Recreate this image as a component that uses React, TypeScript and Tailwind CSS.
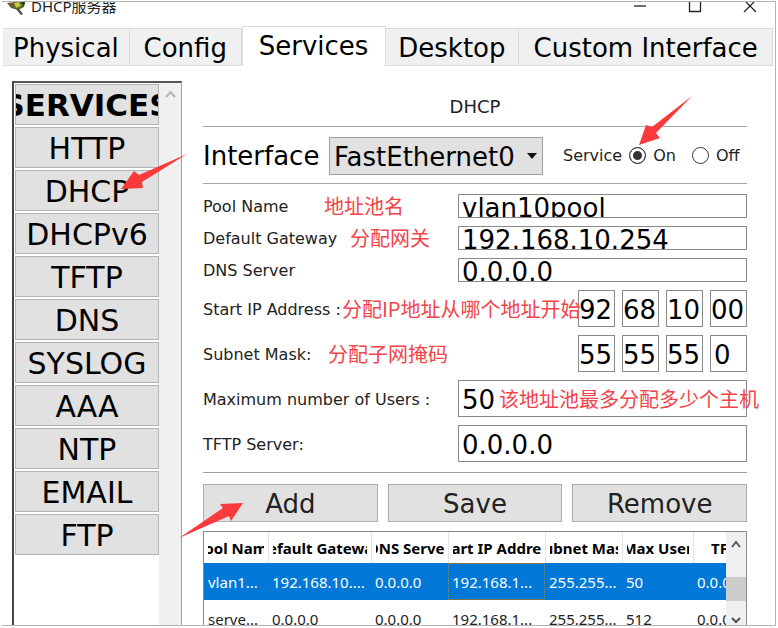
import React from "react";

const tabs = ["Physical", "Config", "Services", "Desktop", "Custom Interface"];
const services = ["HTTP", "DHCP", "DHCPv6", "TFTP", "DNS", "SYSLOG", "AAA", "NTP", "EMAIL", "FTP"];

const columns = [
  { label: "Pool Name", width: "w-16" },
  { label: "Default Gateway", width: "w-[103px]" },
  { label: "DNS Server", width: "w-[77px]" },
  { label: "Start IP Address", width: "w-[97px]" },
  { label: "Subnet Mask", width: "w-[77px]" },
  { label: "Max User", width: "w-[71px]" },
  { label: "TFTP", width: "w-[71px]" },
];

const pools = [
  ["vlan1...", "192.168.10....", "0.0.0.0", "192.168.1...", "255.255...", "50", "0.0.0.0"],
  ["serve...", "0.0.0.0", "0.0.0.0", "192.168.1...", "255.255...", "512", "0.0.0.0"],
];

function Note({ place, children }: { place: string; children: React.ReactNode }) {
  return (
    <span
      className={`pointer-events-none absolute top-1/2 z-10 -translate-y-1/2 whitespace-nowrap font-['Noto_Sans_CJK_SC',sans-serif] text-[20px] leading-6 text-[#f2444a] ${place}`}
    >
      {children}
    </span>
  );
}

function Arrow({ place, size, points }: { place: string; size: [number, number]; points: string }) {
  return (
    <svg
      className={`pointer-events-none absolute z-20 ${place}`}
      width={size[0]}
      height={size[1]}
      viewBox={`0 0 ${size[0]} ${size[1]}`}
      aria-hidden="true"
    >
      <polygon points={points} fill="#fb3a3c" />
    </svg>
  );
}

function TextRow({
  id,
  label,
  value,
  height,
  children,
}: {
  id: string;
  label: string;
  value: string;
  height: string;
  children?: React.ReactNode;
}) {
  return (
    <div className="relative flex items-center">
      <label htmlFor={id} className="w-[255px] shrink-0 pt-0.5 text-base leading-5 whitespace-nowrap">
        {label}
      </label>
      <input
        id={id}
        defaultValue={value}
        className={`min-w-0 flex-1 border border-[#8a8a8a] bg-white px-[3px] text-[26px] leading-7 text-black outline-none ${height}`}
      />
      {children}
    </div>
  );
}

function OctetRow({ name, label, values, children }: { name: string; label: string; values: string[]; children: React.ReactNode }) {
  return (
    <fieldset className="relative flex items-center justify-between">
      <legend className="sr-only">{name}</legend>
      <label htmlFor={`${name}-0`} className="pt-0.5 text-base leading-5 whitespace-nowrap">
        {label}
      </label>
      <div className="flex gap-[7px]">
        {values.map((v, i) => (
          <input
            key={i}
            id={`${name}-${i}`}
            aria-label={i ? `${name} ${i + 1}` : undefined}
            defaultValue={v}
            className={`h-[37px] w-[37px] border border-[#8a8a8a] bg-white pt-0.5 text-[26px] leading-7 text-black outline-none ${v === "0" ? "pl-[3px]" : ""}`}
          />
        ))}
      </div>
      {children}
    </fieldset>
  );
}

function TitleBar() {
  return (
    <header className="flex h-6 shrink-0 items-start justify-between overflow-hidden pl-1">
      <div className="flex gap-1">
        <svg width="20" height="14" viewBox="0 0 20 14" aria-hidden="true">
          <path d="M0 1 L8 0 L18 0 L17 5 L11 8 L4 6 Z" fill="#4d6b2c" />
          <path d="M1 2 L6 1 L5 5 Z" fill="#9a4a3a" />
          <path d="M7 1 L12 0 L14 4 L9 6 Z" fill="#c8c43a" />
          <path d="M14 0 L18 0 L17 4 Z" fill="#26351c" />
          <path d="M9 7 L12 7 L16 12 L14 13 Z" fill="#4a4a4a" />
        </svg>
        <h1 className="-mt-2 font-['Noto_Sans','Noto_Sans_CJK_SC',sans-serif] text-[15px] leading-6 text-[#222]">DHCP服务器</h1>
      </div>
      <div className="flex gap-[41px] pr-[18px]">
        <button aria-label="Minimize" className="h-3 w-3.5">
          <svg width="14" height="12" viewBox="0 0 14 12"><path d="M1 4h12" stroke="#222" strokeWidth="1.3" /></svg>
        </button>
        <button aria-label="Maximize" className="h-3 w-3.5">
          <svg width="14" height="12" viewBox="0 0 14 12"><path d="M1.500 0v9.500h11V0" fill="none" stroke="#222" strokeWidth="1.3" /></svg>
        </button>
        <button aria-label="Close" className="h-3 w-3.5">
          <svg width="14" height="12" viewBox="0 0 14 12"><path d="M3 0l10 10M11 0L1 10" stroke="#222" strokeWidth="1.3" /></svg>
        </button>
      </div>
    </header>
  );
}

function Tabs() {
  return (
    <nav role="tablist" className="mr-0.5 grid h-10 shrink-0 grid-cols-[127fr_112fr_144fr_134fr_254fr] items-end">
      {tabs.map((t) => {
        const active = t === "Services";
        return (
          <button
            key={t}
            role="tab"
            aria-selected={active}
            className={`flex items-center justify-center whitespace-nowrap border-[#dcdcdc] text-[26px] leading-8 ${
              active ? "h-10 border-x border-t bg-white pb-0.5" : "h-[38px] border-y border-r bg-[#f0f0f0] pt-0.5"
            }`}
          >
            {t}
          </button>
        );
      })}
    </nav>
  );
}

function Sidebar() {
  return (
    <aside className="flex w-[170px] shrink-0 border-t-2 border-r border-l-2 border-t-[#555] border-r-[#a0a0a0] border-l-[#444]">
      <ul className="flex min-w-0 flex-1 flex-col gap-0.5 pt-px pl-px">
        <li>
          <button className="flex h-[41px] w-full items-center justify-center overflow-hidden border border-[#b4b4b4] bg-[#e1e1e1] pt-0.5 text-[31px] font-bold">
            SERVICES
          </button>
        </li>
        {services.map((s) => (
          <li key={s} className="relative">
            <button className="flex h-[41px] w-full items-center justify-center border border-[#b4b4b4] bg-[#e1e1e1] pt-0.5 text-[30px]">
              {s}
            </button>
            {s === "DHCP" && (
              <Arrow place="left-[106px] -top-4" size={[66, 35]} points="0,35 13,17 18,21 66,0 21,28 22,34" />
            )}
          </li>
        ))}
      </ul>
      <div className="flex w-[22px] shrink-0 justify-center bg-[#f0f0f0] pt-1.5">
        <svg width="11" height="10" viewBox="0 0 11 10" aria-hidden="true">
          <path d="M1 8l4.500-5L10 8" fill="none" stroke="#b5b5b5" strokeWidth="2" />
        </svg>
      </div>
    </aside>
  );
}

function PoolTable() {
  return (
    <div className="mt-[9px] flex min-h-0 flex-1 overflow-hidden border-x border-t border-[#8a8a8a]">
      <div className="min-w-0 flex-1 overflow-hidden">
        <table className="w-[560px] table-fixed border-collapse font-['Noto_Sans',sans-serif] text-[15px] leading-5">
          <thead>
            <tr className="h-[31px] text-black">
              {columns.map((c) => (
                <th key={c.label} className={`border-r border-[#e5e5e5] px-1 py-0 font-bold ${c.width}`}>
                  <div className="flex justify-center overflow-hidden whitespace-nowrap">{c.label}</div>
                </th>
              ))}
            </tr>
          </thead>
          <tbody>
            {pools.map((row, r) => (
              <tr key={r} className={`h-[37px] ${r === 0 ? "bg-[#0078d7] text-white" : "text-[#222]"}`}>
                {row.map((cell, i) => (
                  <td
                    key={i}
                    className={`overflow-hidden px-1 py-0 whitespace-nowrap ${r === 0 && i === 3 ? "outline-1 -outline-offset-1 outline-dotted outline-[#8a8a60]" : ""}`}
                  >
                    {cell}
                  </td>
                ))}
              </tr>
            ))}
          </tbody>
        </table>
      </div>
      <div className="flex w-5 shrink-0 flex-col items-center justify-between bg-[#f0f0f0]">
        <svg width="12" height="20" viewBox="0 0 12 20" aria-hidden="true">
          <path d="M2 15l4-5 4 5" fill="none" stroke="#555" strokeWidth="2" />
        </svg>
        <div className="mt-3 h-6 w-full bg-[#cdcdcd]" />
        <svg width="12" height="12" viewBox="0 0 12 12" aria-hidden="true">
          <path d="M2 5l4 4 4-4" fill="none" stroke="#555" strokeWidth="2" />
        </svg>
      </div>
    </div>
  );
}

const radio =
  "size-[17px] appearance-none rounded-full border border-[#333] bg-white checked:bg-[#333] checked:shadow-[inset_0_0_0_3px_#fff]";

function DhcpPanel() {
  return (
    <main className="flex min-w-0 flex-1 flex-col pt-3 pr-7 pl-[21px] text-[#222]">
      <h2 className="text-center text-lg leading-7">DHCP</h2>
      <div className="mt-[5px] flex h-[58px] items-center border-y border-[#a5a5a5] pt-px">
        <label htmlFor="interface" className="w-[126px] pt-0.5 text-[26px] text-black">
          Interface
        </label>
        <div className="relative">
          <select
            id="interface"
            className="h-[38px] w-[214px] appearance-none border border-[#a0a0a0] bg-[#e1e1e1] pt-0.5 pl-1 text-[26px] leading-8 text-black"
          >
            <option>FastEthernet0</option>
          </select>
          <svg className="pointer-events-none absolute top-4 right-1.5" width="10" height="6" viewBox="0 0 10 6" aria-hidden="true">
            <path d="M0 0h10L5 6z" fill="#111" />
          </svg>
        </div>
        <fieldset className="ml-5 flex flex-1 items-center text-base leading-5">
          <legend className="sr-only">Service</legend>
          <span className="mr-[7px]">Service</span>
          <label className="flex items-center gap-[7px]">
            <span className="relative flex">
              <input type="radio" name="service" defaultChecked className={radio} />
              <Arrow place="left-[10px] -top-[51px]" size={[53, 49]} points="0,49 7,29 13,31 53,0 17,37 21,42" />
            </span>
            On
          </label>
          <label className="ml-4 flex items-center gap-[7px]">
            <input type="radio" name="service" className={radio} />
            Off
          </label>
        </fieldset>
      </div>

      <form className="flex flex-col gap-2 pt-[10px] pb-[10px]">
        <TextRow id="pool" label="Pool Name" value="vlan10pool" height="h-6 pt-1">
          <Note place="left-[121px]">地址池名</Note>
        </TextRow>
        <TextRow id="gateway" label="Default Gateway" value="192.168.10.254" height="h-6 pt-1">
          <Note place="left-[147px]">分配网关</Note>
        </TextRow>
        <TextRow id="dns" label="DNS Server" value="0.0.0.0" height="h-6 pt-1" />
        <OctetRow name="Start IP Address" label="Start IP Address :" values={["92", "68", "10", "00"]}>
          <Note place="left-[139px]">分配IP地址从哪个地址开始</Note>
        </OctetRow>
        <OctetRow name="Subnet Mask" label="Subnet Mask:" values={["55", "55", "55", "0"]}>
          <Note place="left-[125px]">分配子网掩码</Note>
        </OctetRow>
        <TextRow id="users" label="Maximum number of Users :" value="50" height="h-[37px] pt-0.5">
          <Note place="left-[296px]">该地址池最多分配多少个主机</Note>
        </TextRow>
        <TextRow id="tftp" label="TFTP Server:" value="0.0.0.0" height="h-[37px] pt-0.5" />
      </form>

      <div className="grid grid-cols-3 gap-[10px] border-t border-[#a0a0a0] pt-[11px]">
        {["Add", "Save", "Remove"].map((b) => (
          <div key={b} className="relative">
            <button className="h-[38px] w-full border border-[#adadad] bg-[#e1e1e1] pt-0.5 text-[26px] leading-8">{b}</button>
            {b === "Add" && (
              <Arrow place="-left-6 top-[19px]" size={[64, 35]} points="64,0 41,1 44,5 0,35 50,13 52,18" />
            )}
          </div>
        ))}
      </div>

      <PoolTable />
    </main>
  );
}

export default function App() {
  return (
    <div className="h-screen bg-white pr-0.5 pb-0.5 pl-0.5 pt-px font-['DejaVu_Sans',sans-serif] text-black">
      <div className="flex h-full flex-col overflow-hidden border-t border-r border-b border-[#b4b4b4] pl-px">
        <TitleBar />
        <Tabs />
        <div className="flex min-h-0 flex-1 overflow-hidden pt-[15px] pl-[9px]">
          <Sidebar />
          <DhcpPanel />
        </div>
      </div>
    </div>
  );
}
